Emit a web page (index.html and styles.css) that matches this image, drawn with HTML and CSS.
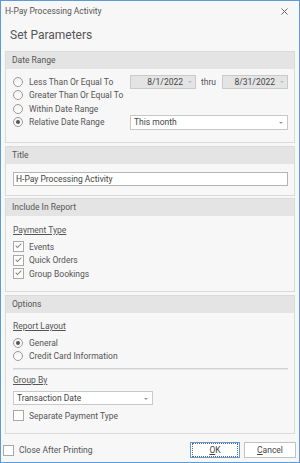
FILE: index.html
```html
<!DOCTYPE html>
<html lang="en">
<head>
    <meta charset="UTF-8">
    <title>H-Pay Processing Activity</title>
    <link rel="stylesheet" href="styles.css">
</head>
<body>
    <div class="window">
        <div class="titlebar">
            <span class="title">H-Pay Processing Activity</span>
            <svg class="close" width="7" height="7" viewBox="0 0 7 7">
                <path d="M0.5 0.5 L6.5 6.5 M6.5 0.5 L0.5 6.5" stroke="#666" stroke-width="1"/>
            </svg>
        </div>
        <h1>Set Parameters</h1>

        <div class="panel">
            <div class="panel-header">Date Range</div>
            <div class="panel-body date-range">
                <div class="row">
                    <label class="opt"><span class="radio"></span>Less Than Or Equal To</label>
                    <div class="date-box">8/1/2022<span class="caret"></span></div>
                    <span class="thru">thru</span>
                    <div class="date-box">8/31/2022<span class="caret"></span></div>
                </div>
                <div class="row">
                    <label class="opt"><span class="radio"></span>Greater Than Or Equal To</label>
                </div>
                <div class="row">
                    <label class="opt"><span class="radio"></span>Within Date Range</label>
                </div>
                <div class="row">
                    <label class="opt"><span class="radio checked"></span>Relative Date Range</label>
                    <div class="select">This month<span class="caret"></span></div>
                </div>
            </div>
        </div>

        <div class="panel title-panel">
            <div class="panel-header">Title</div>
            <div class="panel-body title-body">
                <div class="text-input">H-Pay Processing Activity</div>
            </div>
        </div>

        <div class="panel">
            <div class="panel-header">Include In Report</div>
            <div class="panel-body include-body">
                <div class="group-label">Payment Type</div>
                <label class="opt"><span class="check on"></span>Events</label>
                <label class="opt"><span class="check on"></span>Quick Orders</label>
                <label class="opt"><span class="check on"></span>Group Bookings</label>
            </div>
        </div>

        <div class="panel">
            <div class="panel-header">Options</div>
            <div class="panel-body options-body">
                <div class="group-label">Report Layout</div>
                <label class="opt"><span class="radio checked"></span>General</label>
                <label class="opt"><span class="radio"></span>Credit Card Information</label>
                <div class="separator"></div>
                <div class="group-label group-by">Group By</div>
                <div class="select short">Transaction Date<span class="caret"></span></div>
                <label class="opt separate"><span class="check"></span>Separate Payment Type</label>
            </div>
        </div>

        <div class="footer">
            <label class="opt"><span class="check"></span>Close After Printing</label>
            <div class="buttons">
                <button class="btn default"><span class="focus"><u>O</u>K</span></button>
                <button class="btn cancel"><u>C</u>ancel</button>
            </div>
        </div>
    </div>
</body>
</html>
```

FILE: styles.css
```css
body {
    margin: 0;
    font-family: Roboto, "Liberation Sans", Arial, sans-serif;
    font-size: 8.5px;
    color: #555;
    background-color: #ffffff;
}
.window {
    width: 298px;
    height: 461px;
    border: 1px solid #5a9bd8;
    background-color: #f7f7f7;
}
.titlebar {
    height: 20px;
    display: flex;
    align-items: center;
    justify-content: space-between;
    padding: 0 11px 0 4px;
}
.title {
    color: #555;
}
h1 {
    font-size: 12px;
    font-weight: normal;
    color: #555;
    margin: 0;
    padding-left: 9px;
    height: 30px;
    line-height: 28px;
}
.panel {
    border: 1px solid #dadada;
    background-color: #f7f7f7;
    margin: 0 4px 3px 4px;
}
.panel:first-of-type,
.title-panel {
    margin-bottom: 2px;
}
.panel-header {
    background-color: #e4e4e4;
    height: 17px;
    line-height: 17px;
    padding-left: 6px;
    color: #555;
}
.panel-body {
    padding: 0 6px 0 7px;
    box-sizing: border-box;
}
.opt {
    display: flex;
    align-items: center;
    height: 13.5px;
    white-space: nowrap;
}
.radio {
    width: 8px;
    height: 8px;
    border: 1px solid #9a9a9a;
    border-radius: 50%;
    background: linear-gradient(#f2f2f2, #ffffff);
    margin-right: 6px;
    flex-shrink: 0;
    position: relative;
}
.radio.checked::after {
    content: "";
    position: absolute;
    left: 2px;
    top: 2px;
    width: 4px;
    height: 4px;
    border-radius: 50%;
    background-color: #555;
}
.check {
    width: 9px;
    height: 9px;
    border: 1px solid #a9a9a9;
    background-color: #fff;
    margin-right: 5px;
    flex-shrink: 0;
    position: relative;
}
.check.on::after {
    content: "";
    position: absolute;
    left: 3px;
    top: 0;
    width: 2px;
    height: 5px;
    border: solid #888;
    border-width: 0 1px 1px 0;
    transform: rotate(45deg);
}
.date-range {
    height: 73px;
    padding-top: 6px;
}
.row {
    display: flex;
    align-items: center;
    height: 13.5px;
}
.row .opt {
    width: 117px;
}
.date-box {
    width: 52px;
    height: 12px;
    border: 1px solid #cacaca;
    background-color: #e4e4e4;
    text-align: right;
    padding-right: 12px;
    line-height: 12px;
    color: #444;
    position: relative;
}
.thru {
    margin: 0 0 0 5px;
    width: 21px;
}
.caret {
    position: absolute;
    right: 3px;
    top: 5px;
    border-left: 2px solid transparent;
    border-right: 2px solid transparent;
    border-top: 2px solid #bbb;
}
.select {
    width: 153px;
    height: 13px;
    border: 1px solid #c8c8c8;
    background-color: #fff;
    line-height: 13px;
    padding-left: 3px;
    color: #444;
    position: relative;
}
.select .caret {
    top: 6px;
    right: 4px;
    border-top-color: #999;
}
.select.short {
    width: 135px;
    height: 12px;
    line-height: 12px;
}
.title-body {
    height: 31px;
    padding-top: 8px;
}
.text-input {
    height: 12px;
    border: 1px solid #b5b5b5;
    background-color: #fff;
    line-height: 12px;
    padding-left: 2px;
    color: #444;
}
.include-body {
    height: 75px;
    padding-top: 8px;
}
.group-label {
    text-decoration: underline;
    height: 13px;
    line-height: 13px;
    margin-bottom: 3px;
}
.options-body {
    height: 120px;
    padding-top: 7px;
}
.separator {
    height: 1px;
    background-color: #d2d2d2;
    border-bottom: 1px solid #e8e8e8;
    margin-top: 5px;
}
.group-label.group-by {
    margin-top: 4px;
    margin-bottom: 4px;
}
.opt.separate {
    margin-top: 4px;
}
.footer {
    display: flex;
    align-items: center;
    justify-content: space-between;
    padding: 5px 3px 0 2px;
}
.buttons {
    display: flex;
    gap: 4px;
}
.btn {
    font-family: Roboto, "Liberation Sans", Arial, sans-serif;
    font-size: 8.5px;
    color: #444;
    width: 52px;
    height: 16px;
    border: 1px solid #c2c2c2;
    background-color: #fff;
    padding: 0;
}
.btn.default {
    width: 50px;
    border-color: #5a9bd8;
}
.btn .focus {
    display: block;
    margin: 0 1px;
    height: 12px;
    line-height: 12px;
    border: 1px dotted #666;
}
```
